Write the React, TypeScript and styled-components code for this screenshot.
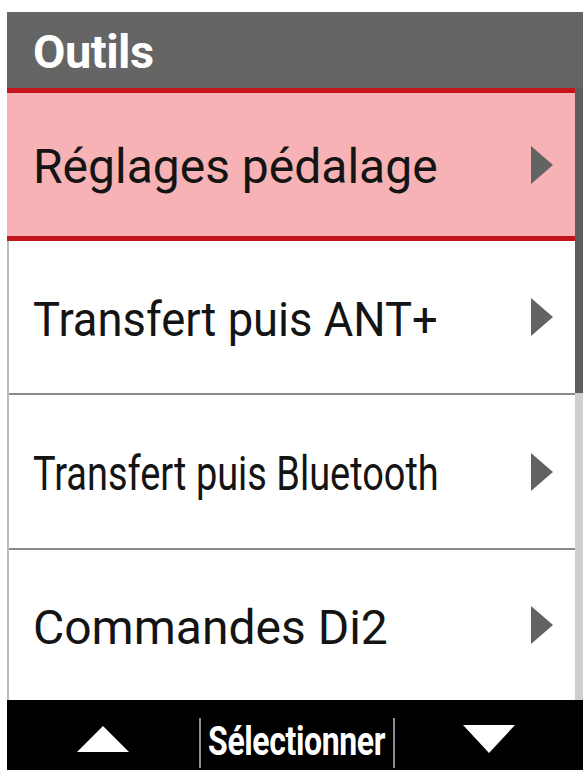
import React from 'react';
import styled, { createGlobalStyle } from 'styled-components';

const GlobalStyle = createGlobalStyle`
  html, body {
    margin: 0;
    padding: 0;
    background: #ffffff;
  }
  body {
    font-family: Roboto, "Noto Sans", "Liberation Sans", sans-serif;
  }
`;

const Screen = styled.div`
  width: 576px;
  margin: 12px 0 0 7px;
  display: flex;
  flex-direction: column;
`;

const Header = styled.div`
  height: 76px;
  background: #656565;
  display: flex;
  align-items: center;
  padding: 2px 0 0 26px;
  box-sizing: border-box;
  color: #ffffff;
  font-weight: 700;
  font-size: 47px;
  letter-spacing: -0.5px;
`;

const Body = styled.div`
  display: flex;
`;

const List = styled.div`
  flex: 1;
  min-width: 0;
  display: flex;
  flex-direction: column;
  border-left: 2px solid #bdbdbd;
`;

const Row = styled.div<{ $selected?: boolean; $height: number }>`
  height: ${p => p.$height}px;
  box-sizing: border-box;
  display: flex;
  align-items: center;
  justify-content: space-between;
  padding: 4px 22px 0 24px;
  background: ${p => (p.$selected ? '#f6b2b5' : '#ffffff')};
  border-top: ${p => (p.$selected ? '5px solid #c4141c' : 'none')};
  border-bottom: ${p => (p.$selected ? '5px solid #c4141c' : '2px solid #8a8a8a')};
  margin-left: ${p => (p.$selected ? '-2px' : '0')};
  padding-left: ${p => (p.$selected ? '26px' : '24px')};
  &:last-child {
    border-bottom: none;
  }
`;

const Label = styled.span<{ $squeeze?: number }>`
  flex: 1;
  min-width: 0;
  font-size: 48px;
  color: #141414;
  white-space: nowrap;
  transform-origin: left center;
  transform: scaleX(${p => p.$squeeze ?? 1});
`;

const Chevron = styled.svg`
  width: 22px;
  height: 38px;
  flex: none;
  margin-top: -4px;
`;

const Scrollbar = styled.div`
  width: 8px;
  flex: none;
  display: flex;
  flex-direction: column;
  background: #cfcfcf;
`;

const Thumb = styled.div`
  height: 305px;
  background: #5c5c5c;
`;

const Footer = styled.div`
  height: 70px;
  background: #000000;
  display: grid;
  grid-template-columns: 192px 1fr 188px;
  align-items: center;
`;

const NavButton = styled.div`
  display: flex;
  align-items: center;
  justify-content: center;
  padding-top: 8px;
`;

const Select = styled.div`
  height: 50px;
  margin-top: 16px;
  display: flex;
  align-items: center;
  justify-content: center;
  border-left: 2px solid #8c8c8c;
  border-right: 2px solid #8c8c8c;
  color: #ffffff;
  font-weight: 700;
  font-size: 40px;
  overflow: hidden;
`;

const SelectText = styled.span`
  display: inline-block;
  transform: scaleX(0.8);
  white-space: nowrap;
  letter-spacing: -0.5px;
  margin-top: -4px;
`;

const Arrow = () => (
  <Chevron viewBox="0 0 22 38">
    <polygon points="0,0 22,19 0,38" fill="#636363" />
  </Chevron>
);

const items = [
  { label: 'Réglages pédalage', selected: true, height: 153, squeeze: 1 },
  { label: 'Transfert puis ANT+', height: 154, squeeze: 0.944 },
  { label: 'Transfert puis Bluetooth', height: 155, squeeze: 0.79 },
  { label: 'Commandes Di2', height: 150, squeeze: 1 },
];

export default function App() {
  return (
    <>
      <GlobalStyle />
      <Screen>
        <Header>Outils</Header>
        <Body>
          <List>
            {items.map(item => (
              <Row key={item.label} $selected={item.selected} $height={item.height}>
                <Label $squeeze={item.squeeze}>{item.label}</Label>
                <Arrow />
              </Row>
            ))}
          </List>
          <Scrollbar>
            <Thumb />
          </Scrollbar>
        </Body>
        <Footer>
          <NavButton>
            <svg width="52" height="26" viewBox="0 0 52 26">
              <polygon points="26,0 52,26 0,26" fill="#ffffff" />
            </svg>
          </NavButton>
          <Select>
            <SelectText>Sélectionner</SelectText>
          </Select>
          <NavButton>
            <svg width="52" height="28" viewBox="0 0 52 28">
              <polygon points="0,0 52,0 26,28" fill="#ffffff" />
            </svg>
          </NavButton>
        </Footer>
      </Screen>
    </>
  );
}
